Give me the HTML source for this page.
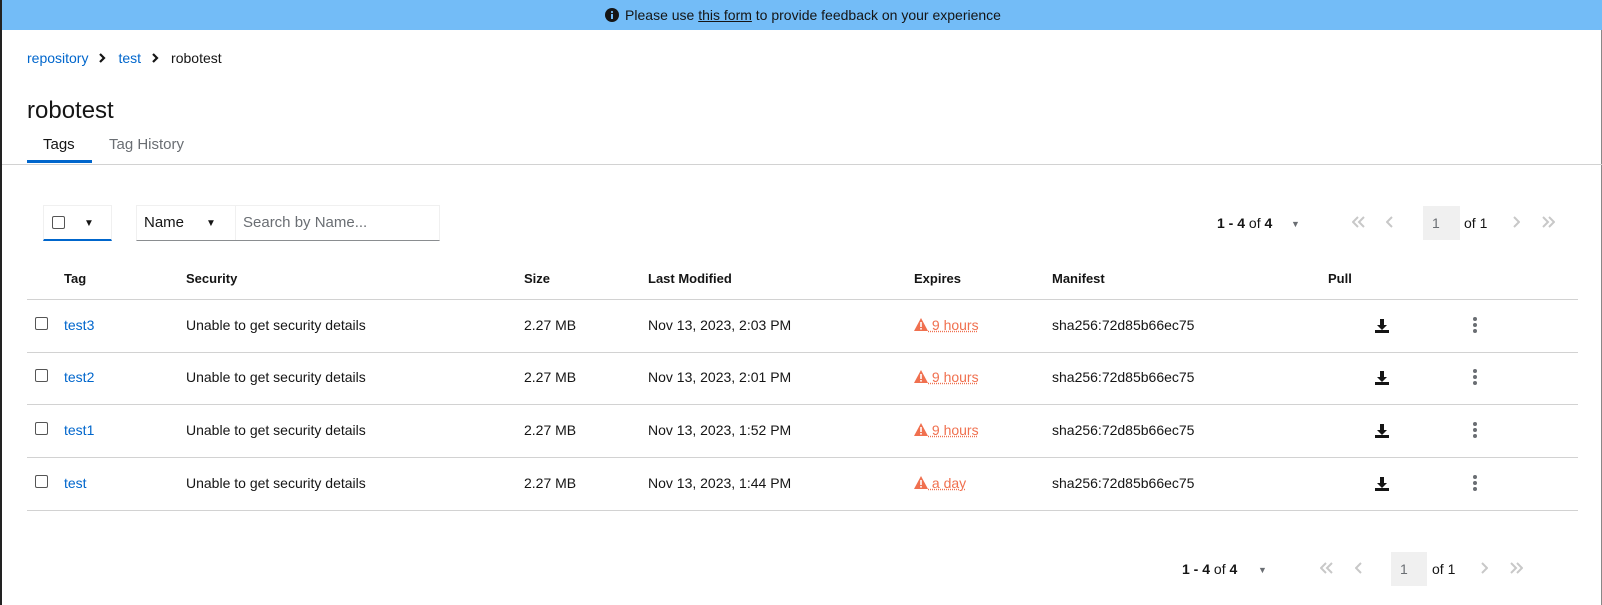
<!DOCTYPE html>
<html><head><meta charset="utf-8"><style>
*{box-sizing:border-box;margin:0;padding:0}
body{width:1602px;height:605px;overflow:hidden;background:#fff;font-family:"Liberation Sans",sans-serif;font-size:14px;color:#151515;position:relative;border-left:2px solid #222;border-right:1px solid #888}
.a{position:absolute;white-space:nowrap}
.blue{color:#0066cc}
.banner{position:absolute;left:0;top:0;width:1602px;height:30px;background:#73bcf7;text-align:center;line-height:30px;font-size:14px}
.hl{position:absolute;left:25px;width:1551px;height:1px;background:#d2d2d2}
.cb{position:absolute;width:13px;height:13px;border:1px solid #555;border-radius:2px;background:#fff}
.warn{color:#f0704f;text-decoration:underline dotted}
.g{color:#c8c8c8}
.th{top:271px;font-weight:bold;font-size:13px}
</style></head><body>
<div class="banner"><svg width="14" height="14" viewBox="0 0 14 14" style="vertical-align:-2px;margin-right:6px"><circle cx="7" cy="7" r="7" fill="#151515"/><rect x="6" y="6" width="2" height="5" fill="#73bcf7"/><circle cx="7" cy="4" r="1.1" fill="#73bcf7"/></svg>Please use <span style="text-decoration:underline">this form</span> to provide feedback on your experience</div>

<div class="a" style="left:25px;top:50px"><span class="blue">repository</span><svg width="30" height="12" viewBox="0 0 30 12" style="vertical-align:-1px"><path d="M12 2l4 4-4 4" stroke="#151515" stroke-width="2.2" fill="none"/></svg><span class="blue">test</span><svg width="30" height="12" viewBox="0 0 30 12" style="vertical-align:-1px"><path d="M12 2l4 4-4 4" stroke="#151515" stroke-width="2.2" fill="none"/></svg>robotest</div>
<div class="a" style="left:25px;top:97px;font-size:24px">robotest</div>
<div class="a" style="left:41px;top:136px;font-size:15px">Tags</div>
<div class="a" style="left:107px;top:136px;font-size:15px;color:#6a6e73">Tag History</div>
<div class="a" style="left:25px;top:160px;width:65px;height:3px;background:#0066cc"></div>
<div class="a" style="left:0;top:164px;width:1602px;height:1px;background:#d2d2d2"></div>

<div class="a" style="left:41px;top:205px;width:69px;height:36px;border:1px solid #f0f0f0;border-bottom:2px solid #0066cc"></div>
<div class="cb" style="left:50px;top:216px"></div>
<div class="a" style="left:82px;top:218px;font-size:10px">&#9660;</div>
<div class="a" style="left:134px;top:205px;width:304px;height:36px;border:1px solid #f0f0f0;border-bottom:1px solid #8a8d90"></div>
<div class="a" style="left:233px;top:206px;width:1px;height:34px;background:#f0f0f0"></div>
<div class="a" style="left:142px;top:214px;font-size:15px">Name</div>
<div class="a" style="left:204px;top:218px;font-size:10px">&#9660;</div>
<div class="a" style="left:241px;top:214px;font-size:15px;color:#6a6e73">Search by Name...</div>

<div class="a" style="left:1215px;top:215px"><b>1 - 4</b> of <b>4</b></div>
<div class="a" style="left:1289px;top:219px;font-size:9px;color:#6a6e73">&#9660;</div>
<svg class="a" style="left:1350px;top:216px" width="14" height="12"><path d="M6 1l-5 5 5 5M12 1l-5 5 5 5" stroke="#c8c8c8" stroke-width="2" fill="none"/></svg>
<svg class="a" style="left:1384px;top:216px" width="8" height="12"><path d="M6 1l-5 5 5 5" stroke="#c8c8c8" stroke-width="2" fill="none"/></svg>
<div class="a" style="left:1421px;top:206px;width:37px;height:34px;background:#f0f0f0;color:#6a6e73;padding:9px 0 0 9px">1</div>
<div class="a" style="left:1462px;top:215px">of 1</div>
<svg class="a" style="left:1510px;top:216px" width="8" height="12"><path d="M2 1l5 5-5 5" stroke="#c8c8c8" stroke-width="2" fill="none"/></svg>
<svg class="a" style="left:1539px;top:216px" width="14" height="12"><path d="M2 1l5 5-5 5M8 1l5 5-5 5" stroke="#c8c8c8" stroke-width="2" fill="none"/></svg>

<div class="a th" style="left:62px">Tag</div>
<div class="a th" style="left:184px">Security</div>
<div class="a th" style="left:522px">Size</div>
<div class="a th" style="left:646px">Last Modified</div>
<div class="a th" style="left:912px">Expires</div>
<div class="a th" style="left:1050px">Manifest</div>
<div class="a th" style="left:1326px">Pull</div>
<div class="hl" style="top:299px"></div>

<div class="cb" style="left:33px;top:317px"></div>
<div class="a blue" style="left:62px;top:317px">test3</div>
<div class="a" style="left:184px;top:317px">Unable to get security details</div>
<div class="a" style="left:522px;top:317px">2.27 MB</div>
<div class="a" style="left:646px;top:317px">Nov 13, 2023, 2:03 PM</div>
<div class="a warn" style="left:912px;top:317px"><svg width="14" height="13" viewBox="0 0 14 13" style="vertical-align:-1px"><path d="M7 0L14 13H0z" fill="#f0704f"/><rect x="6.2" y="4" width="1.6" height="5" fill="#fff"/><rect x="6.2" y="10" width="1.6" height="1.6" fill="#fff"/></svg> 9 hours</div>
<div class="a" style="left:1050px;top:317px">sha256:72d85b66ec75</div>
<div class="hl" style="top:352px"></div>

<div class="cb" style="left:33px;top:369px"></div>
<div class="a blue" style="left:62px;top:369px">test2</div>
<div class="a" style="left:184px;top:369px">Unable to get security details</div>
<div class="a" style="left:522px;top:369px">2.27 MB</div>
<div class="a" style="left:646px;top:369px">Nov 13, 2023, 2:01 PM</div>
<div class="a warn" style="left:912px;top:369px"><svg width="14" height="13" viewBox="0 0 14 13" style="vertical-align:-1px"><path d="M7 0L14 13H0z" fill="#f0704f"/><rect x="6.2" y="4" width="1.6" height="5" fill="#fff"/><rect x="6.2" y="10" width="1.6" height="1.6" fill="#fff"/></svg> 9 hours</div>
<div class="a" style="left:1050px;top:369px">sha256:72d85b66ec75</div>
<div class="hl" style="top:404px"></div>

<div class="cb" style="left:33px;top:422px"></div>
<div class="a blue" style="left:62px;top:422px">test1</div>
<div class="a" style="left:184px;top:422px">Unable to get security details</div>
<div class="a" style="left:522px;top:422px">2.27 MB</div>
<div class="a" style="left:646px;top:422px">Nov 13, 2023, 1:52 PM</div>
<div class="a warn" style="left:912px;top:422px"><svg width="14" height="13" viewBox="0 0 14 13" style="vertical-align:-1px"><path d="M7 0L14 13H0z" fill="#f0704f"/><rect x="6.2" y="4" width="1.6" height="5" fill="#fff"/><rect x="6.2" y="10" width="1.6" height="1.6" fill="#fff"/></svg> 9 hours</div>
<div class="a" style="left:1050px;top:422px">sha256:72d85b66ec75</div>
<div class="hl" style="top:457px"></div>

<div class="cb" style="left:33px;top:475px"></div>
<div class="a blue" style="left:62px;top:475px">test</div>
<div class="a" style="left:184px;top:475px">Unable to get security details</div>
<div class="a" style="left:522px;top:475px">2.27 MB</div>
<div class="a" style="left:646px;top:475px">Nov 13, 2023, 1:44 PM</div>
<div class="a warn" style="left:912px;top:475px"><svg width="14" height="13" viewBox="0 0 14 13" style="vertical-align:-1px"><path d="M7 0L14 13H0z" fill="#f0704f"/><rect x="6.2" y="4" width="1.6" height="5" fill="#fff"/><rect x="6.2" y="10" width="1.6" height="1.6" fill="#fff"/></svg> a day</div>
<div class="a" style="left:1050px;top:475px">sha256:72d85b66ec75</div>
<div class="hl" style="top:510px"></div>

<svg class="a" style="left:1372px;top:318px" width="16" height="16" viewBox="0 0 16 16"><path d="M6 1h4v6h3l-5 5-5-5h3z" fill="#151515"/><rect x="1" y="12" width="14" height="3" fill="#151515"/></svg>
<svg class="a" style="left:1372px;top:370px" width="16" height="16" viewBox="0 0 16 16"><path d="M6 1h4v6h3l-5 5-5-5h3z" fill="#151515"/><rect x="1" y="12" width="14" height="3" fill="#151515"/></svg>
<svg class="a" style="left:1372px;top:423px" width="16" height="16" viewBox="0 0 16 16"><path d="M6 1h4v6h3l-5 5-5-5h3z" fill="#151515"/><rect x="1" y="12" width="14" height="3" fill="#151515"/></svg>
<svg class="a" style="left:1372px;top:476px" width="16" height="16" viewBox="0 0 16 16"><path d="M6 1h4v6h3l-5 5-5-5h3z" fill="#151515"/><rect x="1" y="12" width="14" height="3" fill="#151515"/></svg>
<svg class="a" style="left:1470px;top:316px" width="6" height="18"><circle cx="3" cy="3" r="2" fill="#6a6e73"/><circle cx="3" cy="9" r="2" fill="#6a6e73"/><circle cx="3" cy="15" r="2" fill="#6a6e73"/></svg>
<svg class="a" style="left:1470px;top:368px" width="6" height="18"><circle cx="3" cy="3" r="2" fill="#6a6e73"/><circle cx="3" cy="9" r="2" fill="#6a6e73"/><circle cx="3" cy="15" r="2" fill="#6a6e73"/></svg>
<svg class="a" style="left:1470px;top:421px" width="6" height="18"><circle cx="3" cy="3" r="2" fill="#6a6e73"/><circle cx="3" cy="9" r="2" fill="#6a6e73"/><circle cx="3" cy="15" r="2" fill="#6a6e73"/></svg>
<svg class="a" style="left:1470px;top:474px" width="6" height="18"><circle cx="3" cy="3" r="2" fill="#6a6e73"/><circle cx="3" cy="9" r="2" fill="#6a6e73"/><circle cx="3" cy="15" r="2" fill="#6a6e73"/></svg>

<div class="a" style="left:1180px;top:561px"><b>1 - 4</b> of <b>4</b></div>
<div class="a" style="left:1256px;top:565px;font-size:9px;color:#6a6e73">&#9660;</div>
<svg class="a" style="left:1318px;top:562px" width="14" height="12"><path d="M6 1l-5 5 5 5M12 1l-5 5 5 5" stroke="#c8c8c8" stroke-width="2" fill="none"/></svg>
<svg class="a" style="left:1353px;top:562px" width="8" height="12"><path d="M6 1l-5 5 5 5" stroke="#c8c8c8" stroke-width="2" fill="none"/></svg>
<div class="a" style="left:1389px;top:552px;width:36px;height:34px;background:#f0f0f0;color:#6a6e73;padding:9px 0 0 9px">1</div>
<div class="a" style="left:1430px;top:561px">of 1</div>
<svg class="a" style="left:1478px;top:562px" width="8" height="12"><path d="M2 1l5 5-5 5" stroke="#c8c8c8" stroke-width="2" fill="none"/></svg>
<svg class="a" style="left:1507px;top:562px" width="14" height="12"><path d="M2 1l5 5-5 5M8 1l5 5-5 5" stroke="#c8c8c8" stroke-width="2" fill="none"/></svg>
</body></html>
